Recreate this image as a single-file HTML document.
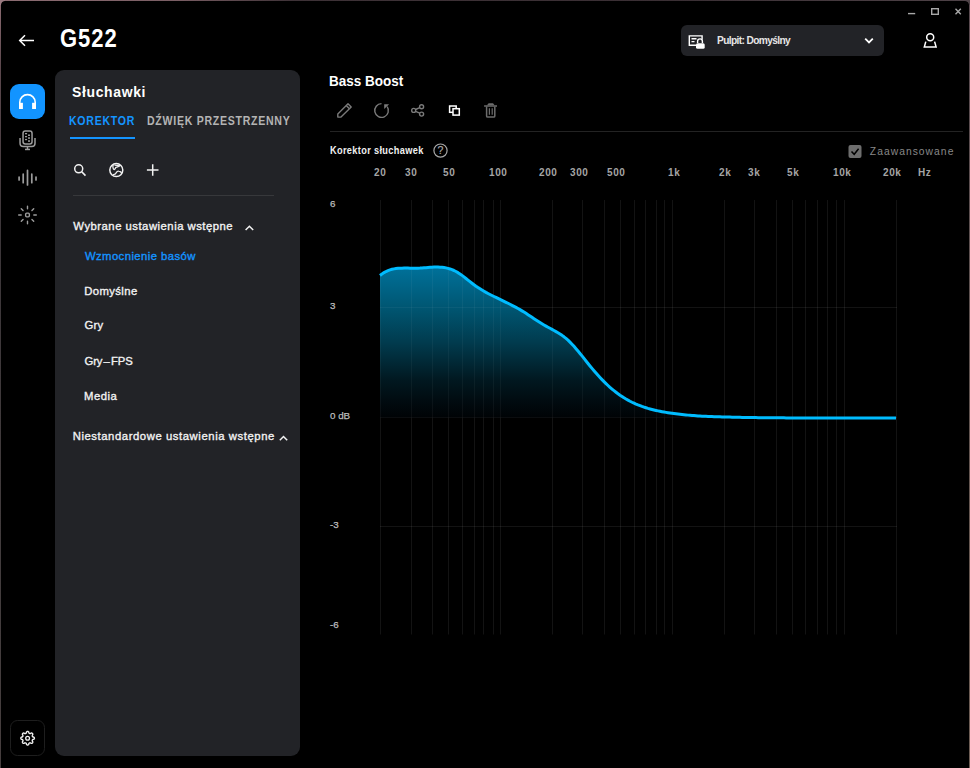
<!DOCTYPE html>
<html><head><meta charset="utf-8">
<style>
*{margin:0;padding:0;box-sizing:border-box}
html,body{width:970px;height:768px;overflow:hidden;background:#000}
body{position:relative;font-family:"Liberation Sans",sans-serif;color:#fff}
.abs{position:absolute;white-space:nowrap}
.t{position:absolute;white-space:nowrap;line-height:1}
#frame{position:absolute;left:0;top:0;width:970px;height:790px;border:1px solid #3a3034;border-radius:5px}
#panel{position:absolute;left:55px;top:70px;width:244.5px;height:685.5px;background:#222327;border-radius:9px}
.lst{font-size:12px;font-weight:bold;color:#f2f2f2}
.fl{position:absolute;white-space:nowrap;line-height:1;top:167.5px}
</style></head><body>
<div id="frame"></div>
<div class="abs" style="left:5px;top:0;width:960px;height:1px;background:linear-gradient(90deg,#8c6c72,#7a5e64 18%,#3e3237 30%,#3a2f34 70%,#4e4247)"></div>
<div class="abs" style="left:0;top:5px;width:1px;height:763px;background:linear-gradient(180deg,#8a6a70,#5c484d 8%,#3c3639 30%,#423c3d 70%,#463e3e)"></div>
<div class="abs" style="left:969px;top:5px;width:1px;height:763px;background:linear-gradient(180deg,#5a4a50,#5e5250 40%,#6a5a52 80%,#6e5e55)"></div>
<div class="abs" style="left:0;top:0;width:5px;height:5px;background:radial-gradient(circle at 5px 5px,transparent 3.5px,#9a7a80 4.5px)"></div>
<div class="abs" style="left:965px;top:0;width:5px;height:5px;background:radial-gradient(circle at 0 5px,transparent 3.5px,#4e4247 4.5px)"></div>
<svg class="abs" style="left:0;top:0" width="970" height="768">
 <!-- window controls -->
 <g stroke="#a8a8a8" stroke-width="1.4" fill="none">
  <line x1="908" y1="13.6" x2="915.2" y2="13.6"/>
  <rect x="931.7" y="8.7" width="6.6" height="5.6"/>
  <path d="M955.5,8.8 L960.8,14.2 M960.8,8.8 L955.5,14.2"/>
 </g>
 <!-- back arrow -->
 <path d="M34,40.5 H19.8 M25,35.2 L19.7,40.5 L25,45.8" stroke="#fff" stroke-width="1.5" fill="none"/>
 <!-- user -->
 <g stroke="#fff" stroke-width="1.5" fill="none">
  <circle cx="930.2" cy="37.3" r="3.5"/>
  <path d="M925.8,41.6 L924.3,47 H936.1 L934.6,41.6"/>
 </g>
 <!-- dropdown -->
 <rect x="681" y="25" width="203" height="31" rx="6" fill="#222327"/>
 <g stroke="#fff" stroke-width="1.4" fill="none">
  <path d="M696.5,45.3 H689.3 V35.9 H702.1 V39.5"/>
  <path d="M691.5,38.7 H696.5 M691.5,41.6 H694.5"/>
  <path d="M697.6,43 V41.3 A2.4,2.4 0 0 1 702.4,41.3 V43"/>
 </g>
 <rect x="696" y="43.2" width="8.7" height="5.6" rx="1.6" fill="#fff"/>
 <path d="M865.2,38.6 L869,42.4 L872.8,38.6" stroke="#fff" stroke-width="1.8" fill="none"/>

 <!-- sidebar -->
 <rect x="10" y="84" width="35" height="35" rx="9" fill="#1294ff"/>
 <path d="M19.8,103.4 V102.3 A7.7,7.7 0 0 1 35.2,102.3 V103.4" stroke="#fff" stroke-width="1.6" fill="none"/>
 <rect x="19" y="102.8" width="3.9" height="6.2" fill="#fff"/>
 <rect x="32.1" y="102.8" width="3.9" height="6.2" fill="#fff"/>
 <g stroke="#9c9c9c" fill="none" stroke-width="1.5">
  <rect x="23.05" y="130.95" width="9" height="13.1" rx="2.2"/>
  <path d="M20.05,138 V143.3 Q20.05,146.55 23.3,146.55 H31.8 Q35,146.55 35,143.3 V138"/>
  <path d="M27.5,146.5 V149"/>
 </g>
 <g fill="#9c9c9c">
  <rect x="25" y="148.7" width="5" height="1.5"/>
  <rect x="25" y="133" width="2.1" height="1.3"/><rect x="25" y="136" width="2.1" height="1.3"/><rect x="25" y="138.9" width="2.1" height="1.3"/>
  <rect x="28" y="134.5" width="2" height="1.5"/><rect x="28" y="137.3" width="2" height="1.5"/><rect x="28" y="140.3" width="2" height="1.5"/>
 </g>
 <g stroke="#9c9c9c" stroke-width="1.7" stroke-linecap="round">
  <path d="M19.1,177 V180 M23.2,174.2 V182.7 M27.5,170.4 V185 M31.8,174.2 V182.7 M36,177 V180"/>
 </g>
 <g stroke="#9c9c9c" stroke-width="1.4" fill="none" stroke-linecap="round">
  <rect x="25.65" y="213.15" width="3.7" height="3.7" rx="1.1"/>
  <path d="M33.80,215.00 L36.30,215.00 M31.95,219.45 L33.72,221.22 M27.50,221.30 L27.50,223.80 M23.05,219.45 L21.28,221.22 M21.20,215.00 L18.70,215.00 M23.05,210.55 L21.28,208.78 M27.50,208.70 L27.50,206.20 M31.95,210.55 L33.72,208.78 "/>
 </g>
 <rect x="10.5" y="720.5" width="34" height="35" rx="7" fill="none" stroke="#1e1e1e" stroke-width="1"/>
 <path d="M27.60,731.40 L27.73,731.41 L27.87,731.43 L28.00,731.47 L28.13,731.52 L28.25,731.59 L28.37,731.68 L28.49,731.78 L28.60,731.91 L28.70,732.07 L28.76,732.36 L28.82,732.66 L28.89,732.82 L28.97,732.95 L29.05,733.07 L29.13,733.17 L29.21,733.25 L29.29,733.33 L29.37,733.39 L29.46,733.44 L29.55,733.49 L29.65,733.52 L29.75,733.55 L29.85,733.56 L29.96,733.57 L30.08,733.56 L30.21,733.55 L30.34,733.52 L30.49,733.49 L30.66,733.42 L30.91,733.25 L31.16,733.09 L31.34,733.05 L31.51,733.03 L31.67,733.04 L31.81,733.07 L31.95,733.11 L32.08,733.16 L32.20,733.23 L32.31,733.30 L32.41,733.39 L32.50,733.49 L32.57,733.60 L32.64,733.72 L32.69,733.85 L32.73,733.99 L32.76,734.13 L32.77,734.29 L32.75,734.46 L32.71,734.64 L32.55,734.89 L32.38,735.14 L32.31,735.31 L32.28,735.46 L32.25,735.59 L32.24,735.72 L32.23,735.84 L32.24,735.95 L32.25,736.05 L32.28,736.15 L32.31,736.25 L32.36,736.34 L32.41,736.43 L32.47,736.51 L32.55,736.59 L32.63,736.67 L32.73,736.75 L32.85,736.83 L32.98,736.91 L33.14,736.98 L33.44,737.04 L33.73,737.10 L33.89,737.20 L34.02,737.31 L34.12,737.43 L34.21,737.55 L34.28,737.67 L34.33,737.80 L34.37,737.93 L34.39,738.07 L34.40,738.20 L34.39,738.33 L34.37,738.47 L34.33,738.60 L34.28,738.73 L34.21,738.85 L34.12,738.97 L34.02,739.09 L33.89,739.20 L33.73,739.30 L33.44,739.36 L33.14,739.42 L32.98,739.49 L32.85,739.57 L32.73,739.65 L32.63,739.73 L32.55,739.81 L32.47,739.89 L32.41,739.97 L32.36,740.06 L32.31,740.15 L32.28,740.25 L32.25,740.35 L32.24,740.45 L32.23,740.56 L32.24,740.68 L32.25,740.81 L32.28,740.94 L32.31,741.09 L32.38,741.26 L32.55,741.51 L32.71,741.76 L32.75,741.94 L32.77,742.11 L32.76,742.27 L32.73,742.41 L32.69,742.55 L32.64,742.68 L32.57,742.80 L32.50,742.91 L32.41,743.01 L32.31,743.10 L32.20,743.17 L32.08,743.24 L31.95,743.29 L31.81,743.33 L31.67,743.36 L31.51,743.37 L31.34,743.35 L31.16,743.31 L30.91,743.15 L30.66,742.98 L30.49,742.91 L30.34,742.88 L30.21,742.85 L30.08,742.84 L29.96,742.83 L29.85,742.84 L29.75,742.85 L29.65,742.88 L29.55,742.91 L29.46,742.96 L29.37,743.01 L29.29,743.07 L29.21,743.15 L29.13,743.23 L29.05,743.33 L28.97,743.45 L28.89,743.58 L28.82,743.74 L28.76,744.04 L28.70,744.33 L28.60,744.49 L28.49,744.62 L28.37,744.72 L28.25,744.81 L28.13,744.88 L28.00,744.93 L27.87,744.97 L27.73,744.99 L27.60,745.00 L27.47,744.99 L27.33,744.97 L27.20,744.93 L27.07,744.88 L26.95,744.81 L26.83,744.72 L26.71,744.62 L26.60,744.49 L26.50,744.33 L26.44,744.04 L26.38,743.74 L26.31,743.58 L26.23,743.45 L26.15,743.33 L26.07,743.23 L25.99,743.15 L25.91,743.07 L25.83,743.01 L25.74,742.96 L25.65,742.91 L25.55,742.88 L25.45,742.85 L25.35,742.84 L25.24,742.83 L25.12,742.84 L24.99,742.85 L24.86,742.88 L24.71,742.91 L24.54,742.98 L24.29,743.15 L24.04,743.31 L23.86,743.35 L23.69,743.37 L23.53,743.36 L23.39,743.33 L23.25,743.29 L23.12,743.24 L23.00,743.17 L22.89,743.10 L22.79,743.01 L22.70,742.91 L22.63,742.80 L22.56,742.68 L22.51,742.55 L22.47,742.41 L22.44,742.27 L22.43,742.11 L22.45,741.94 L22.49,741.76 L22.65,741.51 L22.82,741.26 L22.89,741.09 L22.92,740.94 L22.95,740.81 L22.96,740.68 L22.97,740.56 L22.96,740.45 L22.95,740.35 L22.92,740.25 L22.89,740.15 L22.84,740.06 L22.79,739.97 L22.73,739.89 L22.65,739.81 L22.57,739.73 L22.47,739.65 L22.35,739.57 L22.22,739.49 L22.06,739.42 L21.76,739.36 L21.47,739.30 L21.31,739.20 L21.18,739.09 L21.08,738.97 L20.99,738.85 L20.92,738.73 L20.87,738.60 L20.83,738.47 L20.81,738.33 L20.80,738.20 L20.81,738.07 L20.83,737.93 L20.87,737.80 L20.92,737.67 L20.99,737.55 L21.08,737.43 L21.18,737.31 L21.31,737.20 L21.47,737.10 L21.76,737.04 L22.06,736.98 L22.22,736.91 L22.35,736.83 L22.47,736.75 L22.57,736.67 L22.65,736.59 L22.73,736.51 L22.79,736.43 L22.84,736.34 L22.89,736.25 L22.92,736.15 L22.95,736.05 L22.96,735.95 L22.97,735.84 L22.96,735.72 L22.95,735.59 L22.92,735.46 L22.89,735.31 L22.82,735.14 L22.65,734.89 L22.49,734.64 L22.45,734.46 L22.43,734.29 L22.44,734.13 L22.47,733.99 L22.51,733.85 L22.56,733.72 L22.63,733.60 L22.70,733.49 L22.79,733.39 L22.89,733.30 L23.00,733.23 L23.12,733.16 L23.25,733.11 L23.39,733.07 L23.53,733.04 L23.69,733.03 L23.86,733.05 L24.04,733.09 L24.29,733.25 L24.54,733.42 L24.71,733.49 L24.86,733.52 L24.99,733.55 L25.12,733.56 L25.24,733.57 L25.35,733.56 L25.45,733.55 L25.55,733.52 L25.65,733.49 L25.74,733.44 L25.83,733.39 L25.91,733.33 L25.99,733.25 L26.07,733.17 L26.15,733.07 L26.23,732.95 L26.31,732.82 L26.38,732.66 L26.44,732.36 L26.50,732.07 L26.60,731.91 L26.71,731.78 L26.83,731.68 L26.95,731.59 L27.07,731.52 L27.20,731.47 L27.33,731.43 L27.47,731.41 L27.60,731.40Z" stroke="#f0f0f0" stroke-width="1.4" fill="none"/>
 <circle cx="27.6" cy="738.2" r="1.9" stroke="#f0f0f0" stroke-width="1.3" fill="none"/>
</svg>


<!-- panel -->
<div id="panel"></div>
<svg class="abs" style="left:0;top:0" width="320" height="460">
 <g stroke="#f2f2f2" stroke-width="1.5" fill="none">
  <circle cx="78.7" cy="168.8" r="4"/>
  <path d="M81.8,171.9 L85.5,175.6"/>
  <circle cx="116.3" cy="170.1" r="6.5"/>
  <path d="M113.1,164.9 C112.7,167 112.9,169.4 114.2,169.5 C115.3,169.6 115.1,167.6 116.4,167.1 C117.6,166.6 119.2,166.8 120.3,165.1 M114.4,165.1 C116,165.2 117.5,165.3 118.8,165.7" stroke-width="1.3"/>
  <path d="M112.8,174.9 C114.4,174.5 116,173.8 116.6,172.2 C117,171.2 118,171 118.8,171.1 C119.8,171.2 120.6,171.7 121.6,172.8" stroke-width="1.3"/>
  <path d="M152.7,164.2 V175.8 M146.9,170 H158.5"/>
  <path d="M245.6,230 L249.4,226.2 L253.2,230"/>
  <path d="M279.8,440.2 L283.5,436.5 L287.2,440.2"/>
 </g>
</svg>
<div class="abs" style="left:70px;top:137px;width:65px;height:2px;background:#1494ff"></div>
<div class="abs" style="left:73px;top:195px;width:201px;height:1px;background:#37383b"></div>

<div class="t" id="G522" style="left:60px;top:26px;font-size:25px;font-weight:bold;color:#fff;letter-spacing:1.1px;transform:scaleX(0.88);transform-origin:0 0">G522</div>
<div class="t" id="Pulpit" style="left:717px;top:36px;font-size:10.2px;font-weight:bold;color:#e6e6e6;letter-spacing:-0.63px">Pulpit: Domyślny</div>
<div class="t" id="Sluch" style="left:72.40px;top:84px;font-size:15.5px;font-weight:bold;color:#fff;letter-spacing:0.722px;transform:scaleX(0.9);transform-origin:0 0">Słuchawki</div>
<div class="t" id="Kor" style="left:68.70px;top:115px;font-size:12.3px;font-weight:bold;color:#1494ff;letter-spacing:0.832px;transform:scaleX(0.86);transform-origin:0 0">KOREKTOR</div>
<div class="t" id="Dzw" style="left:147.30px;top:115px;font-size:12.3px;font-weight:bold;color:#b4b4b4;letter-spacing:0.836px;transform:scaleX(0.86);transform-origin:0 0">DŹWIĘK PRZESTRZENNY</div>
<div class="t" id="Wyb" style="left:73.34px;top:221px;font-size:11.3px;color:#f2f2f2;-webkit-text-stroke:0.35px #f2f2f2;letter-spacing:0.498px">Wybrane ustawienia wstępne</div>
<div class="t" id="Wzm" style="left:84.88px;top:251px;font-size:11.3px;color:#1494ff;-webkit-text-stroke:0.35px #1494ff;letter-spacing:0.430px">Wzmocnienie basów</div>
<div class="t" id="Dom" style="left:84.16px;top:286px;font-size:11.3px;color:#f2f2f2;-webkit-text-stroke:0.35px #f2f2f2;letter-spacing:0.414px">Domyślne</div>
<div class="t" id="Gry" style="left:84.46px;top:320px;font-size:11.3px;color:#f2f2f2;-webkit-text-stroke:0.35px #f2f2f2;letter-spacing:0.300px">Gry</div>
<div class="t" id="GryF" style="left:84.46px;top:356px;font-size:11.3px;color:#f2f2f2;-webkit-text-stroke:0.35px #f2f2f2;letter-spacing:-0.1px">Gry<span style="margin:0 1.2px">–</span>FPS</div>
<div class="t" id="Med" style="left:84.08px;top:391px;font-size:11.3px;color:#f2f2f2;-webkit-text-stroke:0.35px #f2f2f2;letter-spacing:0.460px">Media</div>
<div class="t" id="Nie" style="left:72.66px;top:431px;font-size:11.3px;color:#f2f2f2;-webkit-text-stroke:0.35px #f2f2f2;letter-spacing:0.570px">Niestandardowe ustawienia wstępne</div>
<div class="t" id="Bass" style="left:329.40px;top:73px;font-size:15px;font-weight:bold;color:#fff;letter-spacing:0.006px;transform:scaleX(0.9);transform-origin:0 0">Bass Boost</div>
<div class="t" id="KorS" style="left:330.00px;top:146px;font-size:10px;font-weight:bold;color:#f0f0f0;letter-spacing:0.372px;transform:scaleX(0.92);transform-origin:0 0">Korektor słuchawek</div>
<div class="t" id="Zaaw" style="left:869.80px;top:147.00px;font-size:10.3px;font-weight:normal;color:#888;letter-spacing:1.040px">Zaawansowane</div>
<!-- main -->
<svg class="abs" style="left:320px;top:95px" width="650" height="70">
 <g transform="translate(-320,-95)">
 <g stroke="#7a7a7a" stroke-width="1.4" fill="none" stroke-linejoin="round">
  <path d="M337.8,117.1 V114 L348,103.8 L351.2,107 L341,117.1 Z"/>
  <path d="M346.2,105.6 L349.4,108.8"/>
  <path d="M387.2,106.6 A6.85,6.85 0 1 1 381.5,103.65"/>
  <circle cx="413.7" cy="110.4" r="2"/>
  <circle cx="421.6" cy="106.8" r="2"/>
  <circle cx="421.6" cy="114.1" r="2"/>
  <path d="M415.6,109.5 L419.7,107.7 M415.6,111.3 L419.7,113.2"/>
 </g>
 <path d="M384.2,104.3 H389.1 L384.2,108.9 Z" fill="#7a7a7a"/>
 <g stroke="#fff" stroke-width="1.5" fill="none">
  <rect x="449.6" y="106" width="6.6" height="6.3"/>
  <rect x="453" y="108.7" width="6.3" height="6.4" fill="#000"/>
 </g>
 <g stroke="#6c6c6c" stroke-width="1.5" fill="none">
  <path d="M484.1,106 H497"/>
  <path d="M486.6,106.5 V116 Q486.6,117.1 487.7,117.1 H493.7 Q494.8,117.1 494.8,116 V106.5"/>
  <path d="M489.4,108.2 V114.8 M492.2,108.2 V114.8" stroke-width="1.2"/>
 </g>
 <path d="M487,105.2 L488.6,103.2 H493 L494.6,105.2 Z" fill="#6c6c6c"/>
 <!-- help -->
 <circle cx="440.5" cy="150.6" r="6.6" stroke="#a8a8a8" stroke-width="1.2" fill="none"/>
 <!-- checkbox -->
 <rect x="848.5" y="145" width="13" height="13" rx="2" fill="#6e6e6e"/>
 <path d="M851.5,151.5 L854.2,154.3 L858.6,148.8" stroke="#000" stroke-width="1.5" fill="none"/>
 </g>
</svg>
<div class="t" style="left:437.6px;top:145px;font-size:10.5px;color:#a8a8a8;-webkit-text-stroke:0.2px #a8a8a8">?</div>
<div class="abs" style="left:330px;top:131px;width:633px;height:1px;background:#232323"></div>

<svg class="abs" style="left:0;top:0" width="970" height="768">
 <defs><linearGradient id="g" x1="0" y1="267" x2="0" y2="418" gradientUnits="userSpaceOnUse">
  <stop offset="0" stop-color="#00719a"/><stop offset="0.27" stop-color="#005672"/><stop offset="0.5" stop-color="#013b4e"/><stop offset="0.75" stop-color="#011820"/><stop offset="0.88" stop-color="#010c11"/><stop offset="1" stop-color="#000305"/></linearGradient></defs>
 <clipPath id="c"><path d="M380.0,275.50 L382.0,273.94 L384.0,272.62 L386.0,271.51 L388.0,270.60 L390.0,269.87 L392.0,269.30 L394.0,268.87 L396.0,268.55 L398.0,268.34 L400.0,268.20 L402.0,268.13 L404.0,268.10 L406.0,268.10 L408.0,268.11 L410.0,268.14 L412.0,268.17 L414.0,268.19 L416.0,268.19 L418.0,268.16 L420.0,268.09 L422.0,267.97 L424.0,267.82 L426.0,267.65 L428.0,267.47 L430.0,267.30 L432.0,267.17 L434.0,267.07 L436.0,267.03 L438.0,267.04 L440.0,267.13 L442.0,267.29 L444.0,267.54 L446.0,267.89 L448.0,268.36 L450.0,268.94 L452.0,269.65 L454.0,270.50 L456.0,271.50 L458.0,272.65 L460.0,273.96 L462.0,275.38 L464.0,276.89 L466.0,278.46 L468.0,280.06 L470.0,281.67 L472.0,283.24 L474.0,284.76 L476.0,286.20 L478.0,287.57 L480.0,288.86 L482.0,290.09 L484.0,291.26 L486.0,292.39 L488.0,293.46 L490.0,294.51 L492.0,295.52 L494.0,296.50 L496.0,297.47 L498.0,298.43 L500.0,299.39 L502.0,300.35 L504.0,301.31 L506.0,302.28 L508.0,303.27 L510.0,304.27 L512.0,305.30 L514.0,306.34 L516.0,307.42 L518.0,308.52 L520.0,309.67 L522.0,310.85 L524.0,312.07 L526.0,313.34 L528.0,314.64 L530.0,315.98 L532.0,317.32 L534.0,318.67 L536.0,320.01 L538.0,321.32 L540.0,322.60 L542.0,323.82 L544.0,324.99 L546.0,326.12 L548.0,327.22 L550.0,328.29 L552.0,329.37 L554.0,330.45 L556.0,331.58 L558.0,332.75 L560.0,334.01 L562.0,335.36 L564.0,336.83 L566.0,338.43 L568.0,340.19 L570.0,342.11 L572.0,344.17 L574.0,346.35 L576.0,348.64 L578.0,351.00 L580.0,353.44 L582.0,355.92 L584.0,358.43 L586.0,360.95 L588.0,363.47 L590.0,365.95 L592.0,368.40 L594.0,370.78 L596.0,373.09 L598.0,375.33 L600.0,377.51 L602.0,379.61 L604.0,381.64 L606.0,383.60 L608.0,385.49 L610.0,387.30 L612.0,389.03 L614.0,390.69 L616.0,392.26 L618.0,393.76 L620.0,395.19 L622.0,396.53 L624.0,397.81 L626.0,399.01 L628.0,400.15 L630.0,401.22 L632.0,402.23 L634.0,403.18 L636.0,404.08 L638.0,404.92 L640.0,405.70 L642.0,406.44 L644.0,407.13 L646.0,407.78 L648.0,408.39 L650.0,408.95 L652.0,409.48 L654.0,409.97 L656.0,410.44 L658.0,410.87 L660.0,411.28 L662.0,411.66 L664.0,412.02 L666.0,412.37 L668.0,412.69 L670.0,413.00 L672.0,413.30 L674.0,413.57 L676.0,413.84 L678.0,414.09 L680.0,414.32 L682.0,414.54 L684.0,414.75 L686.0,414.95 L688.0,415.13 L690.0,415.31 L692.0,415.47 L694.0,415.62 L696.0,415.76 L698.0,415.90 L700.0,416.02 L702.0,416.13 L704.0,416.24 L706.0,416.34 L708.0,416.43 L710.0,416.52 L712.0,416.60 L714.0,416.67 L716.0,416.74 L718.0,416.81 L720.0,416.87 L722.0,416.92 L724.0,416.98 L726.0,417.03 L728.0,417.08 L730.0,417.12 L732.0,417.17 L734.0,417.22 L736.0,417.27 L738.0,417.31 L740.0,417.35 L742.0,417.39 L744.0,417.42 L746.0,417.46 L748.0,417.49 L750.0,417.52 L752.0,417.55 L754.0,417.58 L756.0,417.61 L758.0,417.63 L760.0,417.66 L762.0,417.68 L764.0,417.70 L766.0,417.72 L768.0,417.74 L770.0,417.76 L772.0,417.78 L774.0,417.79 L776.0,417.81 L778.0,417.82 L780.0,417.84 L782.0,417.85 L784.0,417.86 L786.0,417.88 L788.0,417.89 L790.0,417.90 L792.0,417.91 L794.0,417.92 L796.0,417.93 L798.0,417.94 L800.0,417.95 L802.0,417.95 L804.0,417.96 L806.0,417.97 L808.0,417.97 L810.0,417.98 L812.0,417.99 L814.0,417.99 L816.0,418.00 L818.0,418.00 L820.0,418.01 L822.0,418.01 L824.0,418.02 L826.0,418.02 L828.0,418.03 L830.0,418.03 L832.0,418.03 L834.0,418.04 L836.0,418.04 L838.0,418.04 L840.0,418.05 L842.0,418.05 L844.0,418.05 L846.0,418.05 L848.0,418.06 L850.0,418.06 L852.0,418.06 L854.0,418.06 L856.0,418.06 L858.0,418.07 L860.0,418.07 L862.0,418.07 L864.0,418.07 L866.0,418.07 L868.0,418.07 L870.0,418.08 L872.0,418.08 L874.0,418.08 L876.0,418.08 L878.0,418.08 L880.0,418.08 L882.0,418.08 L884.0,418.08 L886.0,418.08 L888.0,418.08 L890.0,418.09 L892.0,418.09 L894.0,418.09 L896.0,418.09 L896,418 L380,418 Z"/></clipPath>
 <g stroke="rgba(255,255,255,0.075)" stroke-width="1"><line x1="380.5" y1="200" x2="380.5" y2="634.5"/><line x1="411.5" y1="200" x2="411.5" y2="634.5"/><line x1="432.5" y1="200" x2="432.5" y2="634.5"/><line x1="448.5" y1="200" x2="448.5" y2="634.5"/><line x1="462.5" y1="200" x2="462.5" y2="634.5"/><line x1="474.5" y1="200" x2="474.5" y2="634.5"/><line x1="483.5" y1="200" x2="483.5" y2="634.5"/><line x1="493.5" y1="200" x2="493.5" y2="634.5"/><line x1="500.5" y1="200" x2="500.5" y2="634.5"/><line x1="552.5" y1="200" x2="552.5" y2="634.5"/><line x1="582.5" y1="200" x2="582.5" y2="634.5"/><line x1="604.5" y1="200" x2="604.5" y2="634.5"/><line x1="620.5" y1="200" x2="620.5" y2="634.5"/><line x1="634.5" y1="200" x2="634.5" y2="634.5"/><line x1="645.5" y1="200" x2="645.5" y2="634.5"/><line x1="656.5" y1="200" x2="656.5" y2="634.5"/><line x1="664.5" y1="200" x2="664.5" y2="634.5"/><line x1="672.5" y1="200" x2="672.5" y2="634.5"/><line x1="724.5" y1="200" x2="724.5" y2="634.5"/><line x1="754.5" y1="200" x2="754.5" y2="634.5"/><line x1="776.5" y1="200" x2="776.5" y2="634.5"/><line x1="792.5" y1="200" x2="792.5" y2="634.5"/><line x1="805.5" y1="200" x2="805.5" y2="634.5"/><line x1="817.5" y1="200" x2="817.5" y2="634.5"/><line x1="827.5" y1="200" x2="827.5" y2="634.5"/><line x1="836.5" y1="200" x2="836.5" y2="634.5"/><line x1="844.5" y1="200" x2="844.5" y2="634.5"/><line x1="896.5" y1="200" x2="896.5" y2="634.5"/><line x1="380" y1="307.5" x2="897" y2="307.5"/><line x1="380" y1="417.5" x2="897" y2="417.5"/><line x1="380" y1="526.5" x2="897" y2="526.5"/></g>
 <path d="M380.0,275.50 L382.0,273.94 L384.0,272.62 L386.0,271.51 L388.0,270.60 L390.0,269.87 L392.0,269.30 L394.0,268.87 L396.0,268.55 L398.0,268.34 L400.0,268.20 L402.0,268.13 L404.0,268.10 L406.0,268.10 L408.0,268.11 L410.0,268.14 L412.0,268.17 L414.0,268.19 L416.0,268.19 L418.0,268.16 L420.0,268.09 L422.0,267.97 L424.0,267.82 L426.0,267.65 L428.0,267.47 L430.0,267.30 L432.0,267.17 L434.0,267.07 L436.0,267.03 L438.0,267.04 L440.0,267.13 L442.0,267.29 L444.0,267.54 L446.0,267.89 L448.0,268.36 L450.0,268.94 L452.0,269.65 L454.0,270.50 L456.0,271.50 L458.0,272.65 L460.0,273.96 L462.0,275.38 L464.0,276.89 L466.0,278.46 L468.0,280.06 L470.0,281.67 L472.0,283.24 L474.0,284.76 L476.0,286.20 L478.0,287.57 L480.0,288.86 L482.0,290.09 L484.0,291.26 L486.0,292.39 L488.0,293.46 L490.0,294.51 L492.0,295.52 L494.0,296.50 L496.0,297.47 L498.0,298.43 L500.0,299.39 L502.0,300.35 L504.0,301.31 L506.0,302.28 L508.0,303.27 L510.0,304.27 L512.0,305.30 L514.0,306.34 L516.0,307.42 L518.0,308.52 L520.0,309.67 L522.0,310.85 L524.0,312.07 L526.0,313.34 L528.0,314.64 L530.0,315.98 L532.0,317.32 L534.0,318.67 L536.0,320.01 L538.0,321.32 L540.0,322.60 L542.0,323.82 L544.0,324.99 L546.0,326.12 L548.0,327.22 L550.0,328.29 L552.0,329.37 L554.0,330.45 L556.0,331.58 L558.0,332.75 L560.0,334.01 L562.0,335.36 L564.0,336.83 L566.0,338.43 L568.0,340.19 L570.0,342.11 L572.0,344.17 L574.0,346.35 L576.0,348.64 L578.0,351.00 L580.0,353.44 L582.0,355.92 L584.0,358.43 L586.0,360.95 L588.0,363.47 L590.0,365.95 L592.0,368.40 L594.0,370.78 L596.0,373.09 L598.0,375.33 L600.0,377.51 L602.0,379.61 L604.0,381.64 L606.0,383.60 L608.0,385.49 L610.0,387.30 L612.0,389.03 L614.0,390.69 L616.0,392.26 L618.0,393.76 L620.0,395.19 L622.0,396.53 L624.0,397.81 L626.0,399.01 L628.0,400.15 L630.0,401.22 L632.0,402.23 L634.0,403.18 L636.0,404.08 L638.0,404.92 L640.0,405.70 L642.0,406.44 L644.0,407.13 L646.0,407.78 L648.0,408.39 L650.0,408.95 L652.0,409.48 L654.0,409.97 L656.0,410.44 L658.0,410.87 L660.0,411.28 L662.0,411.66 L664.0,412.02 L666.0,412.37 L668.0,412.69 L670.0,413.00 L672.0,413.30 L674.0,413.57 L676.0,413.84 L678.0,414.09 L680.0,414.32 L682.0,414.54 L684.0,414.75 L686.0,414.95 L688.0,415.13 L690.0,415.31 L692.0,415.47 L694.0,415.62 L696.0,415.76 L698.0,415.90 L700.0,416.02 L702.0,416.13 L704.0,416.24 L706.0,416.34 L708.0,416.43 L710.0,416.52 L712.0,416.60 L714.0,416.67 L716.0,416.74 L718.0,416.81 L720.0,416.87 L722.0,416.92 L724.0,416.98 L726.0,417.03 L728.0,417.08 L730.0,417.12 L732.0,417.17 L734.0,417.22 L736.0,417.27 L738.0,417.31 L740.0,417.35 L742.0,417.39 L744.0,417.42 L746.0,417.46 L748.0,417.49 L750.0,417.52 L752.0,417.55 L754.0,417.58 L756.0,417.61 L758.0,417.63 L760.0,417.66 L762.0,417.68 L764.0,417.70 L766.0,417.72 L768.0,417.74 L770.0,417.76 L772.0,417.78 L774.0,417.79 L776.0,417.81 L778.0,417.82 L780.0,417.84 L782.0,417.85 L784.0,417.86 L786.0,417.88 L788.0,417.89 L790.0,417.90 L792.0,417.91 L794.0,417.92 L796.0,417.93 L798.0,417.94 L800.0,417.95 L802.0,417.95 L804.0,417.96 L806.0,417.97 L808.0,417.97 L810.0,417.98 L812.0,417.99 L814.0,417.99 L816.0,418.00 L818.0,418.00 L820.0,418.01 L822.0,418.01 L824.0,418.02 L826.0,418.02 L828.0,418.03 L830.0,418.03 L832.0,418.03 L834.0,418.04 L836.0,418.04 L838.0,418.04 L840.0,418.05 L842.0,418.05 L844.0,418.05 L846.0,418.05 L848.0,418.06 L850.0,418.06 L852.0,418.06 L854.0,418.06 L856.0,418.06 L858.0,418.07 L860.0,418.07 L862.0,418.07 L864.0,418.07 L866.0,418.07 L868.0,418.07 L870.0,418.08 L872.0,418.08 L874.0,418.08 L876.0,418.08 L878.0,418.08 L880.0,418.08 L882.0,418.08 L884.0,418.08 L886.0,418.08 L888.0,418.08 L890.0,418.09 L892.0,418.09 L894.0,418.09 L896.0,418.09 L896,418 L380,418 Z" fill="url(#g)"/>
 <g clip-path="url(#c)" stroke="rgba(255,255,255,0.045)" stroke-width="1"><line x1="380.5" y1="200" x2="380.5" y2="634.5"/><line x1="411.5" y1="200" x2="411.5" y2="634.5"/><line x1="432.5" y1="200" x2="432.5" y2="634.5"/><line x1="448.5" y1="200" x2="448.5" y2="634.5"/><line x1="462.5" y1="200" x2="462.5" y2="634.5"/><line x1="474.5" y1="200" x2="474.5" y2="634.5"/><line x1="483.5" y1="200" x2="483.5" y2="634.5"/><line x1="493.5" y1="200" x2="493.5" y2="634.5"/><line x1="500.5" y1="200" x2="500.5" y2="634.5"/><line x1="552.5" y1="200" x2="552.5" y2="634.5"/><line x1="582.5" y1="200" x2="582.5" y2="634.5"/><line x1="604.5" y1="200" x2="604.5" y2="634.5"/><line x1="620.5" y1="200" x2="620.5" y2="634.5"/><line x1="634.5" y1="200" x2="634.5" y2="634.5"/><line x1="645.5" y1="200" x2="645.5" y2="634.5"/><line x1="656.5" y1="200" x2="656.5" y2="634.5"/><line x1="664.5" y1="200" x2="664.5" y2="634.5"/><line x1="672.5" y1="200" x2="672.5" y2="634.5"/><line x1="724.5" y1="200" x2="724.5" y2="634.5"/><line x1="754.5" y1="200" x2="754.5" y2="634.5"/><line x1="776.5" y1="200" x2="776.5" y2="634.5"/><line x1="792.5" y1="200" x2="792.5" y2="634.5"/><line x1="805.5" y1="200" x2="805.5" y2="634.5"/><line x1="817.5" y1="200" x2="817.5" y2="634.5"/><line x1="827.5" y1="200" x2="827.5" y2="634.5"/><line x1="836.5" y1="200" x2="836.5" y2="634.5"/><line x1="844.5" y1="200" x2="844.5" y2="634.5"/><line x1="896.5" y1="200" x2="896.5" y2="634.5"/><line x1="380" y1="307.5" x2="897" y2="307.5"/><line x1="380" y1="417.5" x2="897" y2="417.5"/><line x1="380" y1="526.5" x2="897" y2="526.5"/></g>
 <path d="M380.0,275.50 L382.0,273.94 L384.0,272.62 L386.0,271.51 L388.0,270.60 L390.0,269.87 L392.0,269.30 L394.0,268.87 L396.0,268.55 L398.0,268.34 L400.0,268.20 L402.0,268.13 L404.0,268.10 L406.0,268.10 L408.0,268.11 L410.0,268.14 L412.0,268.17 L414.0,268.19 L416.0,268.19 L418.0,268.16 L420.0,268.09 L422.0,267.97 L424.0,267.82 L426.0,267.65 L428.0,267.47 L430.0,267.30 L432.0,267.17 L434.0,267.07 L436.0,267.03 L438.0,267.04 L440.0,267.13 L442.0,267.29 L444.0,267.54 L446.0,267.89 L448.0,268.36 L450.0,268.94 L452.0,269.65 L454.0,270.50 L456.0,271.50 L458.0,272.65 L460.0,273.96 L462.0,275.38 L464.0,276.89 L466.0,278.46 L468.0,280.06 L470.0,281.67 L472.0,283.24 L474.0,284.76 L476.0,286.20 L478.0,287.57 L480.0,288.86 L482.0,290.09 L484.0,291.26 L486.0,292.39 L488.0,293.46 L490.0,294.51 L492.0,295.52 L494.0,296.50 L496.0,297.47 L498.0,298.43 L500.0,299.39 L502.0,300.35 L504.0,301.31 L506.0,302.28 L508.0,303.27 L510.0,304.27 L512.0,305.30 L514.0,306.34 L516.0,307.42 L518.0,308.52 L520.0,309.67 L522.0,310.85 L524.0,312.07 L526.0,313.34 L528.0,314.64 L530.0,315.98 L532.0,317.32 L534.0,318.67 L536.0,320.01 L538.0,321.32 L540.0,322.60 L542.0,323.82 L544.0,324.99 L546.0,326.12 L548.0,327.22 L550.0,328.29 L552.0,329.37 L554.0,330.45 L556.0,331.58 L558.0,332.75 L560.0,334.01 L562.0,335.36 L564.0,336.83 L566.0,338.43 L568.0,340.19 L570.0,342.11 L572.0,344.17 L574.0,346.35 L576.0,348.64 L578.0,351.00 L580.0,353.44 L582.0,355.92 L584.0,358.43 L586.0,360.95 L588.0,363.47 L590.0,365.95 L592.0,368.40 L594.0,370.78 L596.0,373.09 L598.0,375.33 L600.0,377.51 L602.0,379.61 L604.0,381.64 L606.0,383.60 L608.0,385.49 L610.0,387.30 L612.0,389.03 L614.0,390.69 L616.0,392.26 L618.0,393.76 L620.0,395.19 L622.0,396.53 L624.0,397.81 L626.0,399.01 L628.0,400.15 L630.0,401.22 L632.0,402.23 L634.0,403.18 L636.0,404.08 L638.0,404.92 L640.0,405.70 L642.0,406.44 L644.0,407.13 L646.0,407.78 L648.0,408.39 L650.0,408.95 L652.0,409.48 L654.0,409.97 L656.0,410.44 L658.0,410.87 L660.0,411.28 L662.0,411.66 L664.0,412.02 L666.0,412.37 L668.0,412.69 L670.0,413.00 L672.0,413.30 L674.0,413.57 L676.0,413.84 L678.0,414.09 L680.0,414.32 L682.0,414.54 L684.0,414.75 L686.0,414.95 L688.0,415.13 L690.0,415.31 L692.0,415.47 L694.0,415.62 L696.0,415.76 L698.0,415.90 L700.0,416.02 L702.0,416.13 L704.0,416.24 L706.0,416.34 L708.0,416.43 L710.0,416.52 L712.0,416.60 L714.0,416.67 L716.0,416.74 L718.0,416.81 L720.0,416.87 L722.0,416.92 L724.0,416.98 L726.0,417.03 L728.0,417.08 L730.0,417.12 L732.0,417.17 L734.0,417.22 L736.0,417.27 L738.0,417.31 L740.0,417.35 L742.0,417.39 L744.0,417.42 L746.0,417.46 L748.0,417.49 L750.0,417.52 L752.0,417.55 L754.0,417.58 L756.0,417.61 L758.0,417.63 L760.0,417.66 L762.0,417.68 L764.0,417.70 L766.0,417.72 L768.0,417.74 L770.0,417.76 L772.0,417.78 L774.0,417.79 L776.0,417.81 L778.0,417.82 L780.0,417.84 L782.0,417.85 L784.0,417.86 L786.0,417.88 L788.0,417.89 L790.0,417.90 L792.0,417.91 L794.0,417.92 L796.0,417.93 L798.0,417.94 L800.0,417.95 L802.0,417.95 L804.0,417.96 L806.0,417.97 L808.0,417.97 L810.0,417.98 L812.0,417.99 L814.0,417.99 L816.0,418.00 L818.0,418.00 L820.0,418.01 L822.0,418.01 L824.0,418.02 L826.0,418.02 L828.0,418.03 L830.0,418.03 L832.0,418.03 L834.0,418.04 L836.0,418.04 L838.0,418.04 L840.0,418.05 L842.0,418.05 L844.0,418.05 L846.0,418.05 L848.0,418.06 L850.0,418.06 L852.0,418.06 L854.0,418.06 L856.0,418.06 L858.0,418.07 L860.0,418.07 L862.0,418.07 L864.0,418.07 L866.0,418.07 L868.0,418.07 L870.0,418.08 L872.0,418.08 L874.0,418.08 L876.0,418.08 L878.0,418.08 L880.0,418.08 L882.0,418.08 L884.0,418.08 L886.0,418.08 L888.0,418.08 L890.0,418.09 L892.0,418.09 L894.0,418.09 L896.0,418.09" stroke="#00bcff" stroke-width="3" fill="none" stroke-linecap="butt" stroke-linejoin="round"/>
</svg>
<div style="font-size:10px;font-weight:bold;color:#a5a5a5;letter-spacing:0.6px">
<div class="fl" style="left:374px">20</div>
<div class="fl" style="left:405px">30</div>
<div class="fl" style="left:443px">50</div>
<div class="fl" style="left:489px">100</div>
<div class="fl" style="left:539px">200</div>
<div class="fl" style="left:570px">300</div>
<div class="fl" style="left:607px">500</div>
<div class="fl" style="left:668px">1k</div>
<div class="fl" style="left:719px">2k</div>
<div class="fl" style="left:748px">3k</div>
<div class="fl" style="left:787px">5k</div>
<div class="fl" style="left:833px">10k</div>
<div class="fl" style="left:883px">20k</div>
<div class="fl" style="left:918px">Hz</div>
</div>
<div style="font-size:9.8px;color:#bdbdbd;-webkit-text-stroke:0.25px #bdbdbd">
<div class="t" style="left:330px;top:198.5px">6</div>
<div class="t" style="left:330px;top:300.5px">3</div>
<div class="t" style="left:330px;top:410.5px">0 dB</div>
<div class="t" style="left:330px;top:520px">-3</div>
<div class="t" style="left:330px;top:620px">-6</div>
</div>
</body></html>
